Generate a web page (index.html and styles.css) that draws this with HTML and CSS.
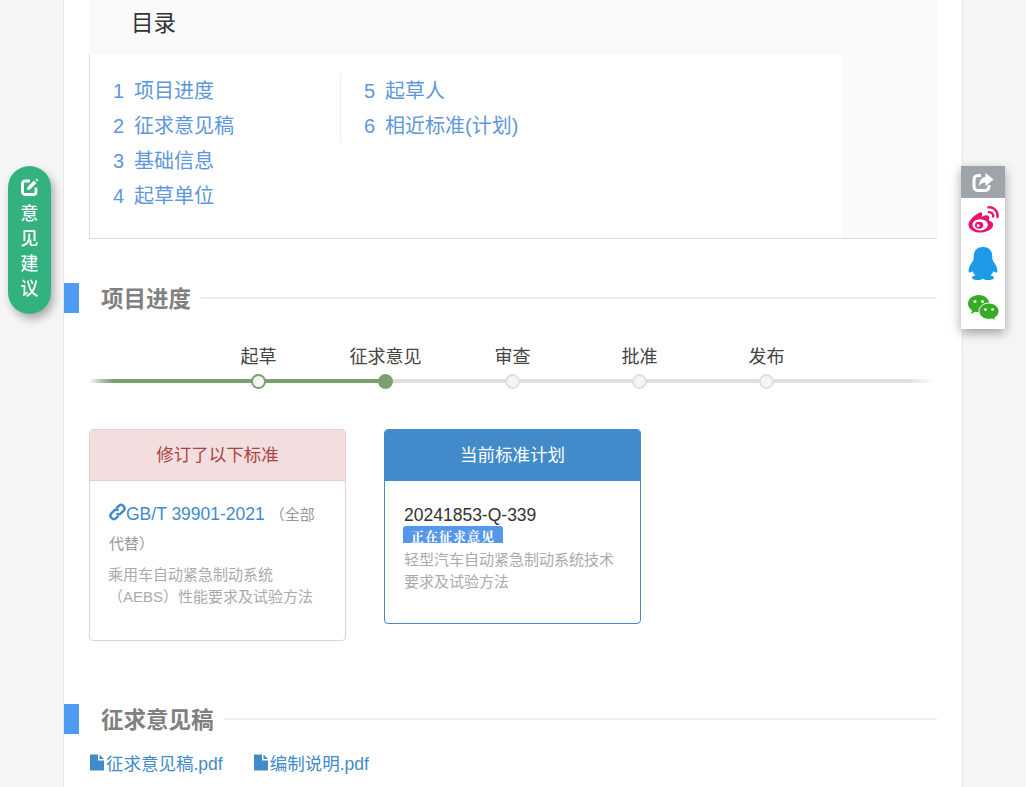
FILE: index.html
```html
<!DOCTYPE html>
<html lang="zh-CN">
<head>
    <meta charset="UTF-8">
    <title>轻型汽车自动紧急制动系统技术要求及试验方法</title>
    <link rel="stylesheet" href="styles.css">
</head>
<body>
    <!-- Floating feedback button -->
    <a class="feedback-btn">
        <svg class="feedback-icon" viewBox="0 0 18 18">
            <path d="M15 9.500V14a2.500 2.500 0 0 1-2.500 2.500H4A2.500 2.500 0 0 1 1.500 14V5.500A2.500 2.500 0 0 1 4 3h5" fill="none" stroke="#fff" stroke-width="2.800"/>
            <path d="M6.500 9 13 2.500 15.500 5 9 11.500 6 12Z" fill="#fff"/>
            <path d="M14.500 1.500 15.500 .5 17.500 2.500 16.500 3.500Z" fill="#fff"/>
        </svg>
        <span>意</span><span>见</span><span>建</span><span>议</span>
    </a>

    <!-- Share bar -->
    <div class="share-bar">
        <div class="share-head">
            <svg width="22" height="20" viewBox="0 0 22 20">
                <path d="M9 3.500H6A4 4 0 0 0 2 7.500v7A4 4 0 0 0 6 18.500h7a4 4 0 0 0 4-4V13" fill="none" stroke="#fff" stroke-width="3"/>
                <path d="M13.500 1 21.500 7.500 13.500 14V10.500C10.500 10.500 8.500 11.500 7 14.500 7 9.500 9 5.500 13.500 5Z" fill="#fff"/>
            </svg>
        </div>
        <svg class="share-icon icon-weibo" viewBox="0 0 34 30">
            <path d="M14 7.500C7.500 10 1 16.500 1.500 21c.5 5 7 8 13.500 7.500C21.500 28 27 24.500 27 20.500c0-3-3-4-4.500-4.500 1-2.500.5-4.500-1-5.200-1.500-.6-4 0-6.500 1.500 1-3 .5-5.500-1-4.800Z" fill="#e6136f"/>
            <ellipse cx="13.500" cy="20.500" rx="8" ry="5.800" fill="#fff"/>
            <ellipse cx="12.500" cy="21" rx="4.300" ry="3.600" fill="#e6136f"/>
            <circle cx="11.500" cy="21.500" r="1.500" fill="#fff"/>
            <path d="M22 2.500C27.500 1.500 32.500 6.500 31.500 12.500M22.500 7.500C25 7 27.500 9.500 27 12" fill="none" stroke="#e6136f" stroke-width="2.400" stroke-linecap="round"/>
        </svg>
        <svg class="share-icon icon-qq" viewBox="2 1 26 33" preserveAspectRatio="none">
            <path d="M15 1C9 1 7 5.500 7 10c0 2 0 3-1 5-2 3-3.500 6-3.500 9 0 2 1 2.500 3.500 .5.5 2 1.500 3 2.500 4-2 .5-3 1.500-3 2.500 0 1.500 3 2 5 2 2 0 3.500-.5 4.500-1.500 1 1 2.500 1.500 4.500 1.500 2 0 5-.5 5-2 0-1-1-2-3-2.500 1-1 2-2 2.500-4 2.500 2 3.500 1.500 3.500-.5 0-3-1.500-6-3.500-9-1-2-1-3-1-5C23 5.500 21 1 15 1Z" fill="#1e9be8"/>
        </svg>
        <svg class="share-icon icon-wechat" viewBox="0 0 33 27">
            <path d="M12 1C5.900 1 1 4.900 1 9.800c0 2.800 1.600 5.200 4.200 6.800L4 20l4-2.200c1.200.3 2.500.5 4 .5h.8C18 15 20 10 22.500 8.500 21 4 17 1 12 1Z" fill="#35ac23"/>
            <path d="M22 9c-5.500 0-10 3.700-10 8.200s4.500 8.200 10 8.200c1.200 0 2.300-.2 3.300-.5l3.500 1.800-1-3c2.500-1.500 4.200-3.800 4.200-6.500C32 12.700 27.500 9 22 9Z" fill="#35ac23" stroke="#fff" stroke-width="1"/>
            <circle cx="8" cy="7.500" r="1.500" fill="#fff"/>
            <circle cx="15.500" cy="7.500" r="1.500" fill="#fff"/>
            <circle cx="18.500" cy="15.500" r="1.300" fill="#fff"/>
            <circle cx="25.500" cy="15.500" r="1.300" fill="#fff"/>
        </svg>
    </div>

    <div class="page">
        <!-- TOC -->
        <div class="toc">
            <div class="toc-title">目录</div>
            <div class="toc-body">
                <ul class="toc-col toc-col-first">
                    <li><span class="toc-num">1</span>项目进度</li>
                    <li><span class="toc-num">2</span>征求意见稿</li>
                    <li><span class="toc-num">3</span>基础信息</li>
                    <li><span class="toc-num">4</span>起草单位</li>
                </ul>
                <ul class="toc-col">
                    <li><span class="toc-num">5</span>起草人</li>
                    <li><span class="toc-num">6</span>相近标准(计划)</li>
                </ul>
            </div>
        </div>

        <!-- Progress -->
        <div class="section-head section-head-first">
            <span class="section-mark"></span>
            <h2>项目进度</h2>
            <span class="section-line"></span>
        </div>

        <div class="steps">
            <div class="step step-done"><span>起草</span><i></i></div>
            <div class="step step-current"><span>征求意见</span><i></i></div>
            <div class="step"><span>审查</span><i></i></div>
            <div class="step"><span>批准</span><i></i></div>
            <div class="step"><span>发布</span><i></i></div>
        </div>

        <div class="cards">
            <div class="card card-red">
                <div class="card-head">修订了以下标准</div>
                <div class="card-body">
                    <div class="card-code">
                        <svg class="link-icon" viewBox="0 0 18 18">
                            <path d="M8 5 10.500 2.500a3.200 3.200 0 0 1 4.500 0l.5.5a3.200 3.200 0 0 1 0 4.500L12.500 10.500a3.200 3.200 0 0 1-4.500 0" fill="none" stroke="#428bca" stroke-width="2.600"/>
                            <path d="M10 13 7.500 15.500a3.200 3.200 0 0 1-4.500 0l-.5-.5a3.200 3.200 0 0 1 0-4.500L5.500 7.500a3.200 3.200 0 0 1 4.500 0" fill="none" stroke="#428bca" stroke-width="2.600"/>
                        </svg><a>GB/T 39901-2021</a> <span class="card-note">（全部</span><span class="card-note">代替）</span>
                    </div>
                    <p class="card-desc">乘用车自动紧急制动系统（AEBS）性能要求及试验方法</p>
                </div>
            </div>
            <div class="card card-blue">
                <div class="card-head">当前标准计划</div>
                <div class="card-body">
                    <div class="card-plan">20241853-Q-339</div>
                    <div class="status-tag">正在征求意见</div>
                    <p class="card-desc">轻型汽车自动紧急制动系统技术要求及试验方法</p>
                </div>
            </div>
        </div>

        <!-- Drafts -->
        <div class="section-head">
            <span class="section-mark"></span>
            <h2>征求意见稿</h2>
            <span class="section-line"></span>
        </div>
        <div class="files">
            <a class="file-link">
                <svg class="file-icon" viewBox="0 0 14 16"><path d="M0 0H8V6H14V16H0Z M9.500 0 14 4.500H9.500Z" fill="#428bca"/></svg>征求意见稿.pdf
            </a>
            <a class="file-link">
                <svg class="file-icon" viewBox="0 0 14 16"><path d="M0 0H8V6H14V16H0Z M9.500 0 14 4.500H9.500Z" fill="#428bca"/></svg>编制说明.pdf
            </a>
        </div>
    </div>
</body>
</html>
```

FILE: styles.css
```css
* {
    box-sizing: border-box;
}

html, body {
    margin: 0;
    padding: 0;
    height: 787px;
    overflow: hidden;
}

body {
    background: #f5f5f5;
    color: #333;
    font-family: "Liberation Sans", "Noto Sans CJK SC", sans-serif;
    font-size: 14px;
}

ul {
    margin: 0;
    padding: 0;
    list-style: none;
}

/* Page column */
.page {
    width: 900px;
    height: 787px;
    margin-left: 63px;
    padding-right: 25px;
    background: #fff;
    border-left: 1px solid #e7e7e7;
    border-right: 1px solid #e7e7e7;
    overflow: hidden;
}

/* TOC */
.toc {
    margin-left: 25px;
    height: 239px;
    background: #fafafa;
    border-bottom: 1px solid #ddd;
}

.toc-title {
    height: 54px;
    padding: 9px 0 0 42px;
    font-size: 22.5px;
    line-height: 30px;
}

.toc-body {
    display: flex;
    width: 753px;
    height: 184px;
    padding: 20px 0 0 23px;
    border-left: 1px solid #ddd;
    background: #fff;
    position: relative;
}

.toc-col {
    width: 228px;
    color: #5e97db;
    font-size: 20px;
}

.toc-col li {
    height: 35px;
    line-height: 35px;
    white-space: nowrap;
}

.toc-col-first {
    margin-right: 23px;
    align-self: flex-start;
}

.toc-num {
    display: inline-block;
    width: 21px;
}

.toc-body::before {
    content: "";
    position: absolute;
    left: 250px;
    top: 19px;
    width: 1px;
    height: 70px;
    background: #f1f1f1;
}

/* Section heading */
.section-head {
    display: flex;
    align-items: center;
    height: 30px;
}

.section-head-first {
    margin-top: 44px;
}

.section-mark {
    width: 15px;
    height: 30px;
    background: #4e9cf1;
}

.section-head h2 {
    margin: 4px 10px 0 22px;
    color: #808080;
    font-size: 22.5px;
    font-weight: bold;
    line-height: 30px;
}

.section-line {
    flex: 1;
    height: 2px;
    background: #eee;
}

/* Progress steps */
.steps {
    display: flex;
    height: 70px;
    margin: 15px 2px 0 25px;
    padding-left: 106px;
    position: relative;
    background: linear-gradient(to right, transparent 0, #e0e0e0 3%, #e0e0e0 97%, transparent 100%) no-repeat 0 51px / 100% 4px;
}

.steps::before {
    content: "";
    position: absolute;
    left: 0;
    top: 51px;
    width: 296px;
    height: 4px;
    background: linear-gradient(to right, transparent 0, #7ba06d 8%);
}

.step {
    width: 127px;
    position: relative;
    text-align: center;
    font-size: 18px;
    line-height: 26px;
    color: #444;
    white-space: nowrap;
}

.step span {
    display: block;
    padding-top: 16px;
}

.step i {
    position: absolute;
    left: 56px;
    top: 46px;
    width: 15px;
    height: 15px;
    border: 2px solid #e0e0e0;
    border-radius: 50%;
    background: #f5f5f5;
}

.step-done i {
    border-color: #7ba06d;
}

.step-current i {
    border-color: #7ba06d;
    background: #7ba06d;
}

/* Cards */
.cards {
    display: flex;
    align-items: flex-start;
    gap: 38px;
    margin: 31px 0 0 25px;
}

.card {
    width: 257px;
    border: 1px solid;
    border-radius: 4px;
    overflow: hidden;
    background: #fff;
}

.card-head {
    height: 51px;
    font-size: 17.5px;
    line-height: 50px;
    text-align: center;
}

.card-red {
    height: 212px;
    border-color: #ebccd1;
}

.card-red .card-head {
    background: #f2dede;
    border-bottom: 1px solid #ebccd1;
    color: #a94442;
}

.card-blue {
    height: 195px;
    border-color: #428bca;
}

.card-blue .card-head {
    background: #428bca;
    color: #fff;
}

.card-body {
    padding: 23px 18px 0 19px;
}

.card-red .card-body {
    padding-top: 19px;
}

.card-code {
    font-size: 17.5px;
    line-height: 29px;
    color: #428bca;
}

.link-icon {
    width: 17px;
    height: 18px;
    vertical-align: -1px;
}

.card-note {
    color: #999;
    font-size: 15px;
}

.card-plan {
    color: #333;
    font-size: 17.5px;
    line-height: 22px;
}

.status-tag {
    width: 100px;
    height: 17px;
    margin-left: -1px;
    background: #5597e8;
    border-radius: 3px 3px 0 0;
    color: #fff;
    font-family: "Noto Serif CJK SC", "Noto Sans CJK SC", sans-serif;
    font-size: 13px;
    font-weight: bold;
    letter-spacing: 1px;
    line-height: 19px;
    text-align: center;
}

.card-desc {
    margin: 0;
    color: #aaa;
    font-size: 15px;
    line-height: 22px;
}

.card-red .card-desc {
    margin-top: 6px;
    margin-left: -1px;
}

.card-blue .card-desc {
    margin-top: 6px;
}

/* Draft section */
.cards + .section-head {
    margin-top: 63px;
}

.files {
    display: flex;
    gap: 31px;
    margin: 17px 0 0 26px;
}

.file-link {
    color: #428bca;
    font-size: 17.5px;
    line-height: 26px;
    white-space: nowrap;
}

.file-icon {
    width: 14px;
    height: 17px;
    margin-right: 2px;
    vertical-align: -1px;
}

/* Floating feedback button */
.feedback-btn {
    position: fixed;
    left: 8px;
    top: 166px;
    width: 43px;
    height: 148px;
    padding-top: 12px;
    display: flex;
    flex-direction: column;
    align-items: center;
    background: #33b17f;
    border-radius: 22px;
    box-shadow: 3px 5px 8px rgba(0, 0, 0, 0.3);
    color: #fff;
    font-size: 18px;
    font-weight: 500;
    line-height: 25px;
    z-index: 10;
}

.feedback-icon {
    width: 18px;
    height: 18px;
    margin-bottom: 6px;
}

/* Share bar */
.share-bar {
    position: fixed;
    left: 961px;
    top: 166px;
    width: 44px;
    height: 163px;
    display: flex;
    flex-direction: column;
    align-items: center;
    background: #fff;
    box-shadow: 0 4px 10px rgba(0, 0, 0, 0.35);
    z-index: 10;
}

.share-head {
    display: flex;
    align-items: center;
    justify-content: center;
    width: 100%;
    height: 32px;
    background: #9ea4aa;
}

.share-icon {
    flex: none;
    width: 33px;
}

.icon-weibo {
    height: 29px;
    margin-top: 7px;
}

.icon-qq {
    width: 30px;
    height: 34px;
    margin-top: 13px;
}

.icon-wechat {
    height: 27px;
    margin-top: 13px;
}
```
